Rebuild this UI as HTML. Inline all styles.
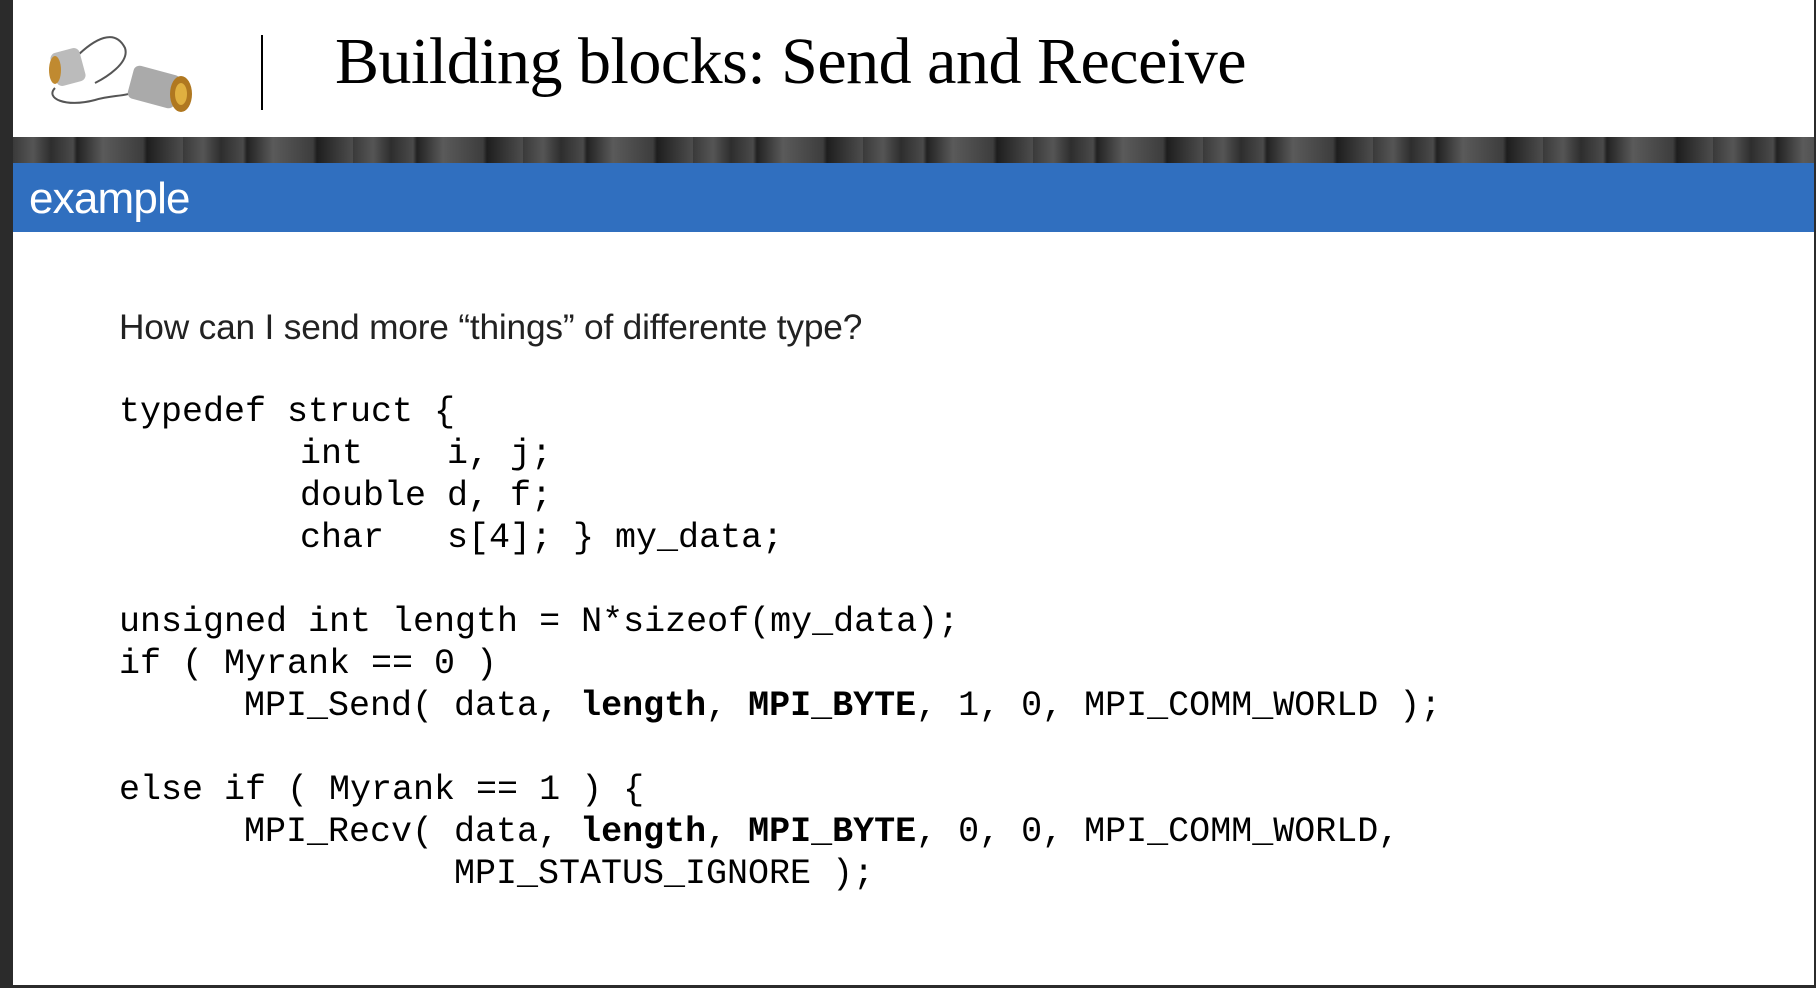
<!DOCTYPE html>
<html><head><meta charset="utf-8"><style>
html,body{margin:0;padding:0;width:1816px;height:988px;overflow:hidden;background:#2b2b2b}
#slide{position:absolute;left:13px;top:0;width:1801px;height:985px;background:#fff}
#hdr{position:absolute;left:0;top:0;width:100%;height:137px;background:#fff}
#wood{position:absolute;left:0;top:137px;width:100%;height:26px;
background:repeating-linear-gradient(90deg,#3a3a3a 0,#555 20px,#2e2e2e 38px,#4a4a4a 60px,#222 64px,#5a5a5a 90px,#3d3d3d 130px,#1e1e1e 134px,#4d4d4d 170px);}
#band{position:absolute;left:0;top:163px;width:100%;height:69px;background:#306fbf}
#band span{position:absolute;left:16px;top:11px;font:300 44px "Liberation Sans",sans-serif;color:#fff;letter-spacing:-0.8px}
#title{position:absolute;left:322px;top:24px;font:66px "Liberation Serif",serif;color:#000;white-space:nowrap;letter-spacing:-0.5px}
#bar{position:absolute;left:248px;top:35px;width:2px;height:75px;background:#000}
#q{position:absolute;left:106px;top:308px;font:35.3px "Liberation Sans",sans-serif;color:#222;white-space:nowrap;letter-spacing:-0.2px}
.c{position:absolute;font:35px/42px "Liberation Mono",monospace;color:#000;white-space:pre}
b{font-weight:bold}
</style></head><body>
<div id="slide">
<div id="hdr">
<svg style="position:absolute;left:22px;top:28px" width="180" height="86" viewBox="0 0 180 86">
<path d="M20 60 C10 70 30 80 60 72 C80 66 90 70 110 60 M40 30 C60 10 80 0 90 20 C95 35 70 50 60 55" fill="none" stroke="#555" stroke-width="2"/>
<rect x="18" y="22" width="30" height="34" rx="6" fill="#bbb" transform="rotate(-15 33 39)"/>
<ellipse cx="20" cy="42" rx="6" ry="14" fill="#c08a30"/>
<rect x="95" y="42" width="48" height="34" rx="6" fill="#aaa" transform="rotate(15 119 59)"/>
<ellipse cx="146" cy="66" rx="11" ry="18" fill="#b07820"/>
<ellipse cx="146" cy="66" rx="6" ry="11" fill="#e0b040"/>
</svg>
<div id="bar"></div>
<div id="title">Building blocks: Send and Receive</div>
</div>
<div id="wood"></div>
<div id="band"><span>example</span></div>
<div id="q">How can I send more “things” of differente type?</div>
<div class="c" style="left:106px;top:391px">typedef struct {</div>
<div class="c" style="left:287px;top:433px">int    i, j;</div>
<div class="c" style="left:287px;top:475px">double d, f;</div>
<div class="c" style="left:287px;top:517px">char   s[4]; } my_data;</div>
<div class="c" style="left:106px;top:601px">unsigned int length = N*sizeof(my_data);</div>
<div class="c" style="left:106px;top:643px">if ( Myrank == 0 )</div>
<div class="c" style="left:231px;top:685px">MPI_Send( data, <b>length</b>, <b>MPI_BYTE</b>, 1, 0, MPI_COMM_WORLD );</div>
<div class="c" style="left:106px;top:769px">else if ( Myrank == 1 ) {</div>
<div class="c" style="left:231px;top:811px">MPI_Recv( data, <b>length</b>, <b>MPI_BYTE</b>, 0, 0, MPI_COMM_WORLD,</div>
<div class="c" style="left:441px;top:853px">MPI_STATUS_IGNORE );</div>
</div>
</body></html>
